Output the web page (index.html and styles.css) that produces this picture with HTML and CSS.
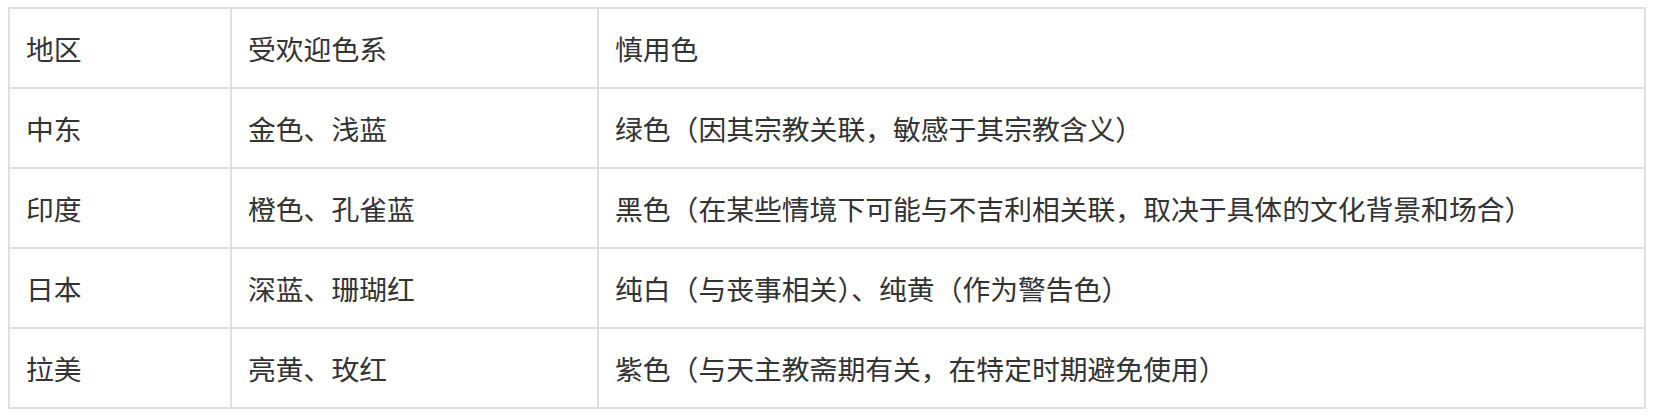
FILE: index.html
```html
<!DOCTYPE html>
<html lang="zh-CN">
<head>
<meta charset="utf-8">
<title>色彩偏好</title>
<link rel="stylesheet" href="styles.css">
</head>
<body>
<table class="color-table">
  <colgroup>
    <col class="col-region">
    <col class="col-pref">
    <col class="col-avoid">
  </colgroup>
  <thead>
    <tr><th>地区</th><th>受欢迎色系</th><th>慎用色</th></tr>
  </thead>
  <tbody>
    <tr><td>中东</td><td>金色、浅蓝</td><td>绿色（因其宗教关联，敏感于其宗教含义）</td></tr>
    <tr><td>印度</td><td>橙色、孔雀蓝</td><td>黑色（在某些情境下可能与不吉利相关联，取决于具体的文化背景和场合）</td></tr>
    <tr><td>日本</td><td>深蓝、珊瑚红</td><td>纯白（与丧事相关）、纯黄（作为警告色）</td></tr>
    <tr><td>拉美</td><td>亮黄、玫红</td><td>紫色（与天主教斋期有关，在特定时期避免使用）</td></tr>
  </tbody>
</table>
</body>
</html>
```

FILE: styles.css
```css
html, body {
  background: #ffffff;
}
body {
  margin: 7px 8px 8px 8px;
  font-family: "Noto Sans CJK SC", "Noto Sans", sans-serif;
  color: #333333;
}
.color-table {
  width: 1638px;
  border-collapse: collapse;
  table-layout: fixed;
  font-size: 27.8px;
}
.col-region { width: 222px; }
.col-pref { width: 367px; }
.color-table th,
.color-table td {
  border: 2px solid #dfdfdf;
  padding: 18px 16px;
  line-height: 42px;
  height: 42px;
  text-align: left;
  font-weight: 400;
  white-space: nowrap;
}
```
